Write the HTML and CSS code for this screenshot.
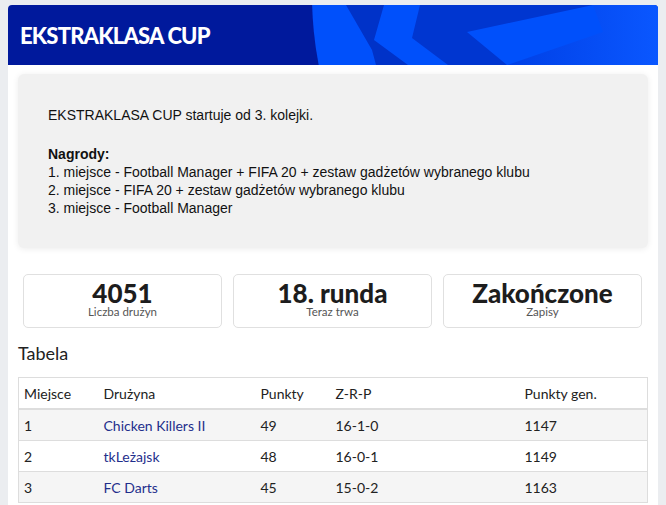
FILE: index.html
```html
<!DOCTYPE html>
<html lang="pl">
<head>
<meta charset="utf-8">
<title>EKSTRAKLASA CUP</title>
<link rel="stylesheet" href="styles.css">
</head>
<body>
<div class="page">
  <main class="card">
    <header class="banner">
      <svg class="banner-art" viewBox="0 0 650 60" preserveAspectRatio="none" aria-hidden="true">
        <defs>
          <linearGradient id="fade" x1="0" y1="0" x2="1" y2="0">
            <stop offset="0" stop-color="#0040e6"/>
            <stop offset="1" stop-color="#0a57ff"/>
          </linearGradient>
        </defs>
        <rect width="650" height="60" fill="#00199c"/>
        <circle cx="674" cy="-10" r="370" fill="#0050fb"/>
        <polygon points="338,0 376,0 366,35 400,60 368,60 364,45" fill="#0032c8"/>
        <polygon points="412,0 585,0 459,27 499,60 440,60 404,33" fill="#0036d0"/>
        <polygon points="585,0 650,0 650,60 499,60 595,27" fill="url(#fade)"/>
      </svg>
      <h1 class="banner-title">EKSTRAKLASA CUP</h1>
    </header>

    <section class="notice">
      <p class="notice-lead">EKSTRAKLASA CUP startuje od 3. kolejki.</p>
      <p class="notice-prizes">
        <strong>Nagrody:</strong><br>
        1. miejsce - Football Manager + FIFA 20 + zestaw gadżetów wybranego klubu<br>
        2. miejsce - FIFA 20 + zestaw gadżetów wybranego klubu<br>
        3. miejsce - Football Manager
      </p>
    </section>

    <section class="stats">
      <div class="stat">
        <div class="stat-value">4051</div>
        <div class="stat-label">Liczba drużyn</div>
      </div>
      <div class="stat">
        <div class="stat-value">18. runda</div>
        <div class="stat-label">Teraz trwa</div>
      </div>
      <div class="stat">
        <div class="stat-value">Zakończone</div>
        <div class="stat-label">Zapisy</div>
      </div>
    </section>

    <h2 class="section-title">Tabela</h2>

    <table class="standings">
      <colgroup>
        <col class="c-place">
        <col class="c-team">
        <col class="c-points">
        <col class="c-record">
        <col class="c-total">
      </colgroup>
      <thead>
        <tr>
          <th>Miejsce</th>
          <th>Drużyna</th>
          <th>Punkty</th>
          <th>Z-R-P</th>
          <th>Punkty gen.</th>
        </tr>
      </thead>
      <tbody>
        <tr>
          <td>1</td>
          <td><a href="#">Chicken Killers II</a></td>
          <td>49</td>
          <td>16-1-0</td>
          <td>1147</td>
        </tr>
        <tr>
          <td>2</td>
          <td><a href="#">tkLeżajsk</a></td>
          <td>48</td>
          <td>16-0-1</td>
          <td>1149</td>
        </tr>
        <tr>
          <td>3</td>
          <td><a href="#">FC Darts</a></td>
          <td>45</td>
          <td>15-0-2</td>
          <td>1163</td>
        </tr>
      </tbody>
    </table>
  </main>
</div>
</body>
</html>
```

FILE: styles.css
```css
html, body {
  margin: 0;
  padding: 0;
}

body {
  background: #ebedf0;
  font-family: Lato, "Noto Sans", sans-serif;
  color: #222;
}

.page {
  padding: 5px 8px 0;
}

.card {
  width: 650px;
  background: #fff;
  border-radius: 4px 4px 0 0;
  padding-bottom: 20px;
}

/* top banner */
.banner {
  position: relative;
  height: 60px;
  display: flex;
  align-items: center;
  padding-left: 12px;
  border-radius: 4px 4px 0 0;
  overflow: hidden;
}

.banner-art {
  position: absolute;
  inset: 0;
  width: 100%;
  height: 100%;
}

.banner-title {
  position: relative;
  margin: 0;
  color: #fff;
  font-family: Lato, sans-serif;
  font-weight: 900;
  font-size: 22px;
  letter-spacing: -0.8px;
  line-height: 1;
  padding-top: 1px;
}

/* info box */
.notice {
  margin: 9px 10px 0;
  background: #f1f1f1;
  border-radius: 6px;
  box-shadow: 0 1px 6px rgba(0, 0, 0, 0.08);
  padding: 32px 30px 31px;
  font-family: "Liberation Sans", Arial, sans-serif;
  font-size: 14px;
  line-height: 18px;
  color: #111;
}

.notice p {
  margin: 0;
}

.notice-lead {
  margin-bottom: 21px !important;
}

/* summary tiles */
.stats {
  display: grid;
  grid-template-columns: repeat(3, 1fr);
  gap: 11px;
  margin: 26px 16px 0 15px;
}

.stat {
  border: 1px solid #e0e0e0;
  border-radius: 5px;
  text-align: center;
  padding: 5px 0 0;
  height: 54px;
  box-sizing: border-box;
}

.stat-value {
  font-weight: 900;
  font-size: 26px;
  line-height: 26px;
  color: #1d1d1d;
}

.stat-label {
  font-size: 11.5px;
  line-height: 12px;
  color: #555;
}

.section-title {
  margin: 14px 0 0 10px;
  font-weight: 400;
  font-size: 18px;
  line-height: 22px;
  color: #222;
}

/* standings table */
.standings {
  margin: 13px 0 0 10px;
  width: 629px;
  table-layout: fixed;
  border-collapse: collapse;
  font-size: 14px;
  color: #222;
}

.c-place { width: 80px; }
.c-team { width: 157px; }
.c-points { width: 75px; }
.c-record { width: 189px; }
.c-total { width: 128px; }

.standings th,
.standings td {
  text-align: left;
  padding: 0 5px;
  height: 30px;
  border: 1px solid #ddd;
  border-left: none;
  border-right: none;
}

.standings th {
  font-weight: 400;
  border-bottom: 2px solid #ddd;
}

.standings tr > :first-child {
  border-left: 1px solid #ddd;
}

.standings tr > :last-child {
  border-right: 1px solid #ddd;
}

.standings tbody tr:nth-child(odd) {
  background: #f5f5f5;
}

.standings a {
  color: #1f2f8c;
  text-decoration: none;
}
```
